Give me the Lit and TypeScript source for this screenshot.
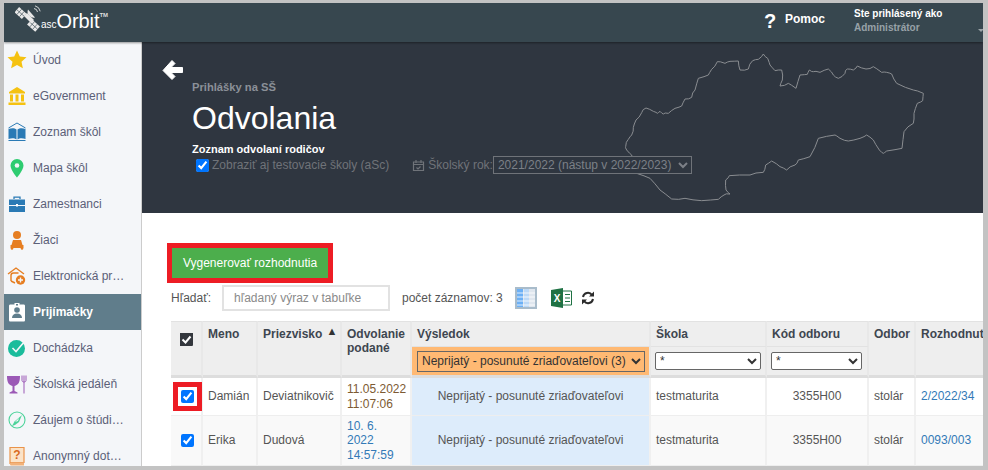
import { LitElement, html, css, svg } from "lit";
import { customElement } from "lit/decorators.js";

const mapBase = "77,320 85,298 95,285 100,262 108,240 125,218 138,204 160,214 172,220 180,214 190,222 205,220 225,205 245,198 255,177 275,172 285,150 295,115 325,105 335,88 352,65 375,70 390,64 415,63 420,90 445,87 458,62 475,58 490,42 503,55 510,75 525,92 545,90 547,120 540,138 565,130 588,145 600,105 622,103 628,90 640,95 660,97 685,87 700,105 715,115 735,100 742,87 760,90 772,78 798,87 820,80 845,97 860,97 875,102 890,130 940,150 970,160 968,182 952,190 942,220 940,250 912,275 906,325 860,333 850,340 838,330 820,300 800,285 780,295 745,303 720,295 705,285 655,295 630,350 595,360 585,375 560,390 540,380 515,363 497,375 490,397 450,405 388,407 377,420 378,450 390,462 372,465 355,478 305,482 255,475 215,477 180,450 150,415 110,400 95,345 80,330"
  .split(" ")
  .map((p) => p.split(",").map(Number));
const mapPts = mapBase
  .map((p, i) => {
    const n = mapBase[(i + 1) % mapBase.length];
    const dx = ((i * 7) % 5) - 2;
    const dy = ((i * 11) % 5) - 2;
    return `${p[0]},${p[1]} ${(p[0] + n[0]) / 2 + dx},${(p[1] + n[1]) / 2 + dy}`;
  })
  .join(" ");

const icons: Record<string, any> = {
  star: svg`<path fill="#f5c211" d="M10 .5l2.800 6 6.700.7-5 4.500 1.400 6.600L10 15l-5.900 3.300 1.400-6.600-5-4.500 6.700-.7z"/>`,
  bank: svg`<path fill="#f5c211" d="M10 1l8 5v1.500H2V6zM3 8.500h3v7H3zM8.500 8.500h3v7h-3zM14 8.500h3v7h-3zM1.500 16.500h17V19h-17z"/>`,
  book: svg`<path fill="none" stroke="#2a7ab5" d="M1.500 6L10 1l8.500 5"/><path fill="#2a7ab5" d="M1.500 7c3-1 6-1 8 .5v10c-2-1.500-5-1.500-8-.5zM18.500 7c-3-1-6-1-8 .5v10c2-1.500 5-1.500 8-.5z"/><path fill="#2a7ab5" d="M1.500 18h17v1h-17z"/>`,
  pin: svg`<path fill="#2ecc71" d="M10 1a6.500 6.500 0 0 0-6.500 6.500C3.500 12 10 19.500 10 19.500S16.500 12 16.500 7.500A6.500 6.500 0 0 0 10 1z"/><circle cx="10" cy="7.500" r="2.300" fill="#f4f6f9"/>`,
  case: svg`<path fill="#2a7ab5" d="M2 5.500h16v5.500H2zM2 12h16v6H2z"/><path fill="none" stroke="#2a7ab5" stroke-width="1.300" d="M7 5V3.200h6V5"/><path fill="#fff" d="M9 10h2v2.500H9z"/>`,
  student: svg`<circle cx="10" cy="5" r="4" fill="#e67e22"/><path fill="#e67e22" d="M6 10h8l1.500 5h-11z"/><path fill="#e67e22" d="M3.500 15h13v3h-13z"/><circle cx="5" cy="18.500" r="1.300" fill="#e67e22"/><circle cx="15" cy="18.500" r="1.300" fill="#e67e22"/>`,
  elect: svg`<path fill="none" stroke="#e67e22" stroke-width="1.400" d="M1 8l8-6 8 6M4 15V9.500c0-1.500 1-2.500 2.500-2.500h5"/><path fill="none" stroke="#e67e22" stroke-width="1.400" d="M4 15l4 2"/><circle cx="13.500" cy="14" r="4.700" fill="#e67e22"/><path fill="#f4f6f9" d="M12.800 11.500h1.400v1.800H16v1.400h-1.800v1.800h-1.400v-1.800H11v-1.400h1.800z"/>`,
  adm: svg`<path fill="#fff" d="M3.500 2.500h4V1h5v1.500h4c1 0 1.500.5 1.500 1.500v14c0 1-.5 1.500-1.500 1.500h-13C2.500 19.500 2 19 2 18V4c0-1 .5-1.500 1.500-1.500z"/><circle cx="10" cy="8" r="2.800" fill="#5f7d8c"/><path fill="#5f7d8c" d="M5 16c0-3 2-4.500 5-4.500s5 1.500 5 4.500z"/><path fill="#5f7d8c" d="M9 2h2v1.500H9z"/>`,
  check: svg`<circle cx="9.500" cy="10.500" r="8.500" fill="#1abc9c"/><path fill="none" stroke="#f4f6f9" stroke-width="1.600" d="M5.500 10l3.500 3.500L17.500 3.500"/>`,
  food: svg`<path fill="#9b59b6" d="M0 2h13c0 6-1.500 9-5.500 10v5l3 1.500v1H2.500v-1l3-1.500v-5C1.500 11 0 8 0 2z"/><path fill="none" stroke="#9b59b6" stroke-width="1" d="M15 1.500v5c0 1 1 1.500 2 1.500s2-.5 2-1.500v-5M17 1.500V19.500"/>`,
  compass: svg`<circle cx="10" cy="10" r="8" fill="none" stroke="#4cd39a" stroke-width="1.100"/><path fill="#4cd39a" d="M15 5l-3 7-4 3-3 1 2.500-4.500z"/><path fill="#f4f6f9" d="M8 12l4-4-1 3z"/>`,
  quest: svg`<path fill="#fbe3c8" stroke="#e9934a" stroke-width="1.200" d="M3 1.500h14v15H4.500C3.500 16.500 3 17 3 18z"/><path fill="#f2b27a" d="M3 18c0-1 .5-1.500 1.500-1.500H17v3H4.500C3.500 19.500 3 19 3 18z"/><text x="10" y="13" text-anchor="middle" font-family="Liberation Sans, sans-serif" font-size="12" font-weight="700" fill="#d9691e">?</text>`,
};

const menu = [
  ["star", "Úvod"], ["bank", "eGovernment"], ["book", "Zoznam škôl"], ["pin", "Mapa škôl"],
  ["case", "Zamestnanci"], ["student", "Žiaci"], ["elect", "Elektronická pr…"], ["adm", "Prijímačky"],
  ["check", "Dochádzka"], ["food", "Školská jedáleň"], ["compass", "Záujem o štúdi…"], ["quest", "Anonymný dot…"],
];

const rows = [
  { name: "Damián", sur: "Deviatnikovič", date: ["11.05.2022", "11:07:06"], link: false, doc: "2/2022/34", mark: true },
  { name: "Erika", sur: "Dudová", date: ["10. 6.", "2022", "14:57:59"], link: true, doc: "0093/003", mark: false },
];

@customElement("app-root")
export class AppRoot extends LitElement {
  static styles = css`
    :host { display: block; width: 988px; height: 470px; box-sizing: border-box; background: #c3c3c3; padding: 3px 5px 4px 4px; font-family: "Liberation Sans", Arial, sans-serif; font-size: 12px; color: #333; overflow: hidden; }
    .frame { width: 979px; height: 463px; display: flex; flex-direction: column; overflow: hidden; background: #fff; }
    .top { height: 39px; flex: none; background: #37474f; display: flex; align-items: flex-start; position: relative; z-index: 2; box-shadow: 0 1px 2px rgba(0,0,0,.4); }
    .logo { display: flex; align-items: flex-end; margin-left: 11px; height: 30px; color: #fff; width: 749px; }
    .logo svg { flex: none; }
    .asc { font-size: 10px; margin: 0 0 2px 0; line-height: 12px; }
    .orbit { font-size: 20px; line-height: 23px; letter-spacing: -.1px; }
    .tm { font-size: 6px; font-weight: 700; align-self: flex-start; margin-top: 9px; color: #ddd; }
    .q { font-size: 20px; font-weight: 700; color: #fff; width: 21px; line-height: 20px; margin-top: 8px; text-align: left; }
    .help { font-weight: 700; color: #fff; width: 69px; margin-top: 9px; line-height: 15px; }
    .user { font-size: 10px; font-weight: 700; line-height: 14px; color: #fff; margin-top: 4px; }
    .user div + div { color: #98a2a8; }
    .caret { position: absolute; left: 974px; top: 26px; width: 0; height: 0; border: 3px solid transparent; border-top-color: #9aa3a8; }
    .body { flex: 1; display: flex; min-height: 0; }
    .side { width: 137px; flex: none; background: #f4f6f9; border-right: 1px solid #ccc; box-sizing: content-box; }
    .item { height: 36px; display: flex; align-items: center; color: #5b6078; font-size: 12px; white-space: nowrap; }
    .item svg { width: 20px; height: 20px; margin-left: 3px; margin-right: 6px; flex: none; }
    .item.on { background: #607d8b; color: #fff; font-weight: 700; }
    .main { flex: 1; min-width: 0; overflow: hidden; }
    .hero { height: 171px; background: #2f3640; position: relative; padding: 38px 0 0 50px; box-sizing: border-box; color: #fff; }
    .back { position: absolute; left: 20px; top: 17px; }
    .map { position: absolute; left: 458px; top: -2px; }
    .crumb { position: relative; font-size: 11.200px; font-weight: 700; color: #8b9098; line-height: 15px; }
    h1 { position: relative; margin: 4px 0 0; font-size: 32px; font-weight: 400; line-height: 38px; color: #fff; }
    .sub { position: relative; font-size: 11px; font-weight: 700; line-height: 14px; margin-top: 5px; }
    .opts { position: relative; display: flex; align-items: center; height: 18px; color: #6f7379; margin-left: 4px; }
    .opts input { margin: 0 3px 0 0; width: 13px; height: 13px; }
    .opts svg { margin-left: 23px; margin-right: 3px; }
    .opts select { margin-left: 0; width: 199px; height: 18px; background: #2f3640; color: #7c8087; border: 1px solid #6f7379; font: 12px "Liberation Sans", Arial, sans-serif; border-radius: 0; }
    .content { padding: 30px 0 0 29px; width: 860px; }
    .btnwrap { display: inline-block; margin-left: -4px; border: 5px solid #ed1c24; }
    .btn { display: block; width: 156px; height: 30px; box-sizing: border-box; background: #4cae4c; border: 0; color: #fff; font: 12px "Liberation Sans", Arial, sans-serif; padding: 0; }
    .tools { display: flex; align-items: center; height: 26px; margin-top: 2px; color: #555; }
    .tools .lab { width: 51px; }
    .tools input { width: 168px; height: 26px; box-sizing: border-box; border: 2px solid #e2e2e2; padding: 0 10px; font: 12px "Liberation Sans", Arial, sans-serif; color: #777; }
    .tools input::placeholder { color: #8a8a8a; }
    .count { margin-left: 12px; width: 113px; }
    .tools svg { flex: none; }
    table { margin-top: 10px; border-collapse: separate; border-spacing: 0; table-layout: fixed; width: 850px; }
    th, td { box-sizing: border-box; border-right: 2px solid #e8e8e8; font-size: 12px; padding: 0 5px; }
    th { background: #eee; text-align: left; font-weight: 700; color: #3e4650; vertical-align: top; line-height: 14px; padding-top: 5px; }
    .thtop { border-top: 1px solid #e2e2e2; }
    .thb { border-bottom: 3px solid #ddd; }
    .r1 { height: 25px; } .r2 { height: 32px; }
    .fil { padding: 0; vertical-align: middle; border-top: 1px solid #e2e2e2; }
    .fil.orange { background: #ffb973; padding: 0 5px; }
    .fil select { display: block; height: 18px; width: 106px; margin-left: 4px; background: #fff; border: 1px solid #666; border-radius: 2px; font: 12px "Liberation Sans", Arial, sans-serif; color: #333; }
    .fil.orange select { width: 228px; height: 21px; margin: 0; background: #ffb973; border-radius: 0; }
    th.cb { padding: 10px 0 0 8px; }
    td { border-right-color: #f0f0f0; border-bottom: 1px solid #eee; color: #555; vertical-align: middle; line-height: 14.300px; }
    tr.a td { background: #fff; height: 38px; }
    tr.b td { background: #f9f9f9; height: 50px; }
    td.res { background: #ddecfb !important; text-align: center; }
    td.kod { text-align: center; padding: 0; }
    td.cbx { padding: 0; }
    td.cbx input { display: block; width: 13px; height: 13px; margin: 0 0 0 10px; }
    .mark { border: 5px solid #ed1c24; width: 29px; height: 29px; box-sizing: border-box; margin-left: 2px; display: flex; align-items: center; justify-content: center; }
    td.cbx .mark input { margin: 0; }
    .d1 { color: #7d5a32; }
    .lnk { color: #337ab7; }
    .sort { font-size: 11px; position: relative; top: -3px; margin-left: 4px; color: #333; }
  `;

  render() {
    return html`<div class="frame">
      <div class="top">
        <div class="logo">
          <svg width="26" height="28" viewBox="0 0 26 28">
            <g transform="rotate(42 5.500 8)">
              <rect x="0.500" y="4.500" width="10" height="7" fill="#e8e8e8"/>
              <path stroke="#37474f" stroke-width=".6" d="M3.800 4.500v7M7.200 4.500v7M.5 8h10"/>
            </g>
            <g transform="rotate(42 18.500 20.500)">
              <rect x="13" y="17" width="11" height="7" fill="#e8e8e8"/>
              <path stroke="#37474f" stroke-width=".6" d="M16.700 17v7M20.400 17v7M13 20.500h11"/>
            </g>
            <path fill="#e8e8e8" d="M9 11l3-3 7 7-3 3z"/>
            <path fill="#e8e8e8" d="M13 4.500a6 6 0 0 0 7 8z"/>
            <path fill="none" stroke="#e8e8e8" stroke-width=".9" d="M19 3.500a4 4 0 0 1 3.500 3.500M20 .8a7 7 0 0 1 5.200 5.500"/>
          </svg>
          <span class="asc">asc</span><span class="orbit">Orbit</span><span class="tm">TM</span>
        </div>
        <div class="q">?</div>
        <div class="help">Pomoc</div>
        <div class="user"><div>Ste prihlásený ako</div><div>Administrátor</div></div>
        <div class="caret"></div>
      </div>
      <div class="body">
        <div class="side">
          ${menu.map(([ic, t]) => html`<div class="item ${t === "Prijímačky" ? "on" : ""}"><svg viewBox="0 0 20 20">${icons[ic]}</svg>${t}</div>`)}
        </div>
        <div class="main">
          <div class="hero">
            <svg class="map" width="388" height="180" viewBox="0 0 1164 540"><polygon points="${mapPts}" fill="none" stroke="#8a8d91" stroke-width="3"/></svg>
            <svg class="back" width="22" height="22" viewBox="0 0 22 22"><path fill="#fff" stroke="#fff" stroke-width="1" stroke-linejoin="round" d="M10 1.500l3 3-4 4h11.500v5H9l4 4-3 3L1 11.500z"/></svg>
            <div class="crumb">Prihlášky na SŠ</div>
            <h1>Odvolania</h1>
            <div class="sub">Zoznam odvolaní rodičov</div>
            <div class="opts">
              <input type="checkbox" ?checked=${true} />
              <span>Zobraziť aj testovacie školy (aSc)</span>
              <svg width="13" height="13" viewBox="0 0 13 13"><path fill="none" stroke="#6f7379" stroke-width="1.200" d="M1.500 3h10v8.500h-10zM1.500 5.500h10M4 1v3M9 1v3M4.500 8.500l1.500 1.500 2.500-2.500"/></svg>
              <span>Školský rok:</span>
              <select><option>2021/2022 (nástup v 2022/2023)</option></select>
            </div>
          </div>
          <div class="content">
            <div class="btnwrap"><button class="btn">Vygenerovať rozhodnutia</button></div>
            <div class="tools">
              <span class="lab">Hľadať:</span>
              <input placeholder="hľadaný výraz v tabuľke" />
              <span class="count">počet záznamov: 3</span>
              <svg width="22" height="22" viewBox="0 0 22 22"><rect x="1" y="1" width="20" height="20" fill="#dfe6ee" stroke="#a9bccb" stroke-width="2"/><rect x="2" y="2" width="6" height="18" fill="#6cb0f5"/><rect x="9" y="2" width="5" height="18" fill="#bcd9f7"/><path stroke="#fff" stroke-width=".8" d="M2 6h18M2 10h18M2 14h18M2 18h18"/></svg>
              <svg style="margin-left:14px" width="21" height="20" viewBox="0 0 21 20"><path fill="#fff" stroke="#1f7244" d="M11 3h9.500v14H11z"/><path stroke="#1f7244" d="M14 6.500h5M14 10h5M14 13.500h5"/><path fill="#1f7244" d="M0 2l12-2v20L0 18z"/><text x="6" y="14" text-anchor="middle" font-family="Liberation Sans, sans-serif" font-size="10" font-weight="700" fill="#fff">X</text></svg>
              <svg style="margin-left:9px" width="14" height="14" viewBox="0 0 14 14"><path fill="none" stroke="#2b2b2b" stroke-width="2" d="M2 6a5 5 0 0 1 9-2M12 8a5 5 0 0 1-9 2"/><path fill="#2b2b2b" d="M13 0.500v5H8zM1 13.500v-5h5z"/></svg>
            </div>
            <table>
              <colgroup><col style="width:32px"/><col style="width:55px"/><col style="width:84px"/><col style="width:70px"/><col style="width:239px"/><col style="width:116px"/><col style="width:102px"/><col style="width:47px"/><col style="width:105px"/></colgroup>
              <thead>
                <tr class="r1">
                  <th class="cb thtop thb" rowspan="2"><svg width="15" height="15" viewBox="0 0 15 15"><path fill="#33373d" d="M1 1h13v11.500c0 1-.5 1.500-1.500 1.500H1z"/><path fill="none" stroke="#fff" stroke-width="2" d="M3.500 7.500l3 3 5-6"/></svg></th>
                  <th class="thtop thb" rowspan="2">Meno</th>
                  <th class="thtop thb" rowspan="2">Priezvisko<span class="sort">▲</span></th>
                  <th class="thtop thb" rowspan="2">Odvolanie podané</th>
                  <th class="thtop">Výsledok</th>
                  <th class="thtop">Škola</th>
                  <th class="thtop">Kód odboru</th>
                  <th class="thtop thb" rowspan="2">Odbor</th>
                  <th class="thtop thb" rowspan="2" style="white-space:nowrap;overflow:hidden">Rozhodnutie</th>
                </tr>
                <tr class="r2">
                  <th class="fil orange thb"><select><option>Neprijatý - posunuté zriaďovateľovi (3)</option></select></th>
                  <th class="fil thb"><select><option>*</option></select></th>
                  <th class="fil thb"><select style="width:91px"><option>*</option></select></th>
                </tr>
              </thead>
              <tbody>
                ${rows.map((r) => html`<tr class="${r.mark ? "a" : "b"}">
                  <td class="cbx">${r.mark ? html`<div class="mark"><input type="checkbox" ?checked=${true} /></div>` : html`<input type="checkbox" ?checked=${true} />`}</td>
                  <td>${r.name}</td>
                  <td>${r.sur}</td>
                  <td class="${r.link ? "lnk" : "d1"}">${r.date.map((d) => html`<div>${d}</div>`)}</td>
                  <td class="res">Neprijatý - posunuté zriaďovateľovi</td>
                  <td>testmaturita</td>
                  <td class="kod">3355H00</td>
                  <td>stolár</td>
                  <td class="lnk">${r.doc}</td>
                </tr>`)}
              </tbody>
            </table>
          </div>
        </div>
      </div>
    </div>`;
  }
}
